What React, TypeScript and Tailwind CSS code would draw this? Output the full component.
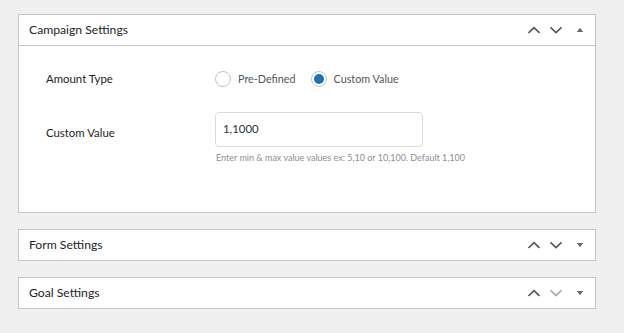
import React from "react";

function Chevron({ dir, muted }: { dir: "up" | "down"; muted?: boolean }) {
  return (
    <svg width="14" height="10" viewBox="0 0 14 10" className={muted ? "text-[#a7aaad]" : "text-[#50575e]"}>
      <path
        d={dir === "up" ? "M1.5 7.8 L7 2.6 L12.5 7.8" : "M1.5 2.4 L7 7.6 L12.5 2.4"}
        fill="none"
        stroke="currentColor"
        strokeWidth="1.6"
      />
    </svg>
  );
}

function Toggle({ open }: { open?: boolean }) {
  return (
    <svg width="10" height="8" viewBox="0 0 10 8" className="text-[#646970]">
      <path d={open ? "M1.8 6 L5 1.8 L8.2 6 Z" : "M1.8 2 L5 6.2 L8.2 2 Z"} fill="currentColor" />
    </svg>
  );
}

function Header({ title, open, downMuted }: { title: string; open?: boolean; downMuted?: boolean }) {
  return (
    <div className="flex h-[30px] items-center pl-[10px] pr-[8px]">
      <h2 className="flex-1 text-[12.2px] text-[#1d2327]">{title}</h2>
      <div className="flex items-center">
        <span className="flex w-[22px] justify-center">
          <Chevron dir="up" />
        </span>
        <span className="flex w-[22px] justify-center">
          <Chevron dir="down" muted={downMuted} />
        </span>
        <span className="ml-[6px] flex w-[14px] justify-center">
          <Toggle open={open} />
        </span>
      </div>
    </div>
  );
}

function Radio({ checked, label }: { checked?: boolean; label: string }) {
  return (
    <label className="flex items-center gap-[7px]">
      <span className="flex h-[16px] w-[16px] items-center justify-center rounded-full border border-[#c3c4c7] bg-white">
        {checked && <span className="h-[10px] w-[10px] rounded-full bg-[#2271b1]" />}
      </span>
      <span className="text-[10.8px] text-[#50575e]">{label}</span>
    </label>
  );
}

export default function App() {
  return (
    <div
      className="min-h-[333px] bg-[#f0f0f1] px-[18px] pt-[14px]"
      style={{ fontFamily: 'Lato, "Noto Sans", sans-serif' }}
    >
      <div className="flex w-[578px] flex-col gap-[16px]">
        <section className="border border-[#c3c4c7] bg-white">
          <div className="border-b border-[#c3c4c7]">
            <Header title="Campaign Settings" open />
          </div>
          <div className="pb-[48px] pl-[27px] pt-[25px]">
            <div className="flex h-[16px] items-center">
              <div className="w-[169px] text-[11.4px] text-[#1d2327]">Amount Type</div>
              <div className="flex items-center gap-[15px]">
                <Radio label="Pre-Defined" />
                <Radio label="Custom Value" checked />
              </div>
            </div>
            <div className="mt-[25px] flex">
              <div className="flex h-[35px] w-[169px] items-center pt-[6px] text-[11.4px] text-[#1d2327]">
                Custom Value
              </div>
              <div>
                <div className="flex h-[35px] w-[208px] items-center rounded-[4px] border border-[#dcdcde] px-[7px] pb-[2px] text-[11.4px] text-[#2c3338]">
                  1,1000
                </div>
                <p className="mt-[5px] pl-[1px] text-[9px] leading-[12px] text-[#8c8f94]">
                  Enter min &amp; max value values ex: 5,10 or 10,100. Default 1,100
                </p>
              </div>
            </div>
          </div>
        </section>
        <section className="border border-[#c3c4c7] bg-white">
          <Header title="Form Settings" />
        </section>
        <section className="border border-[#c3c4c7] bg-white">
          <Header title="Goal Settings" downMuted />
        </section>
      </div>
    </div>
  );
}
